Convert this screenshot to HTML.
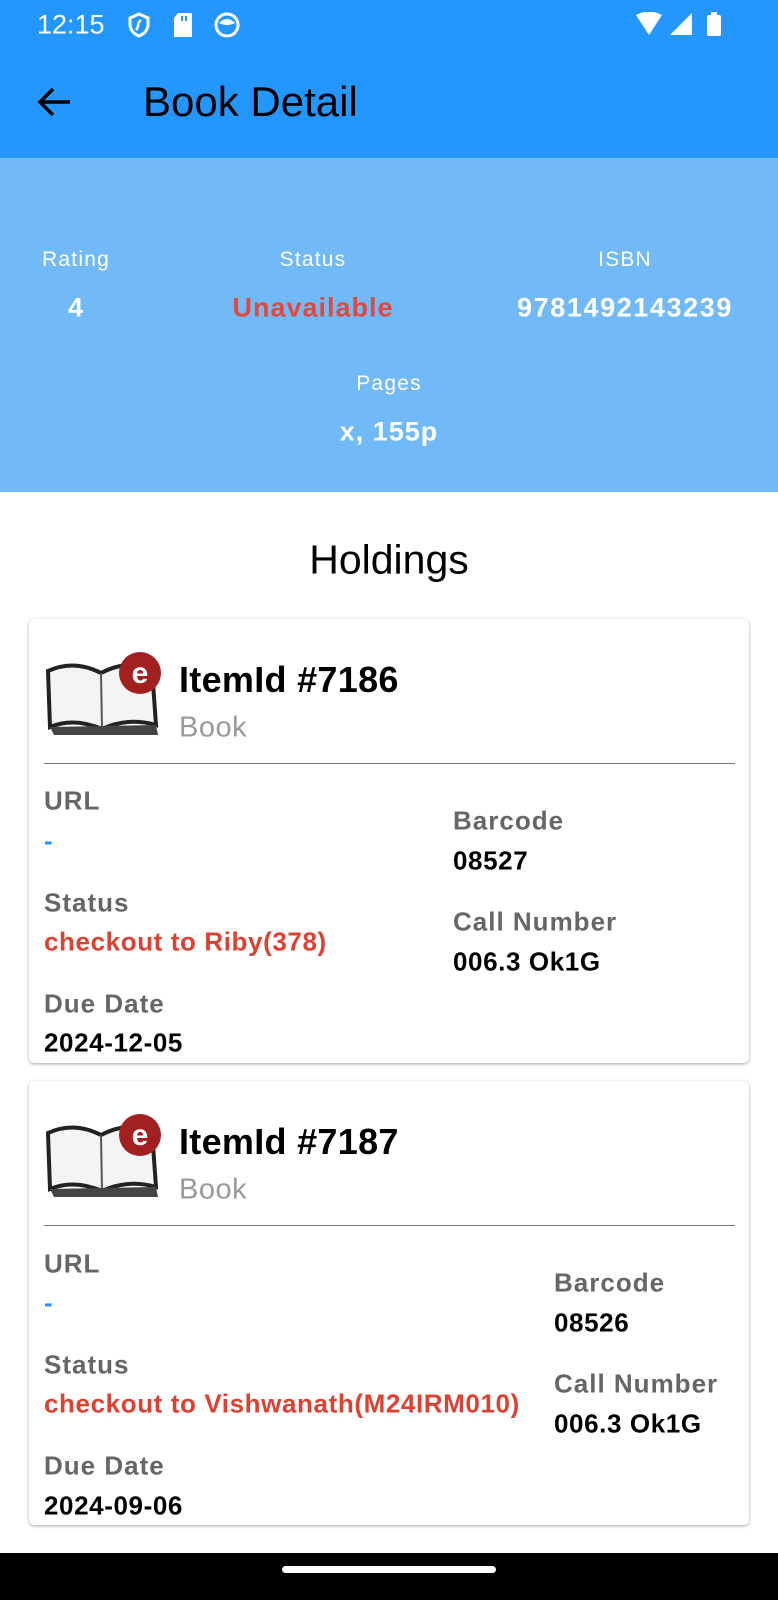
<!DOCTYPE html>
<html><head><meta charset="utf-8"><style>
*{margin:0;padding:0;box-sizing:border-box}
body{width:778px;height:1600px;background:#fff;font-family:"Liberation Sans",sans-serif;position:relative;overflow:hidden}
.a{position:absolute;white-space:nowrap}
.c{transform:translate(-50%,-50%)}
.m{transform:translateY(-50%)}
.lbl{font-size:21px;color:#fff;letter-spacing:1.2px}
.val{font-size:27px;color:#fff;font-weight:bold;letter-spacing:1px}
.card{position:absolute;left:29px;width:720px;background:#fff;border-radius:5px;box-shadow:0 1px 3px rgba(0,0,0,.35)}
.k{font-size:26px;color:#666;font-weight:bold;letter-spacing:1px}
.v{font-size:26px;color:#000;font-weight:bold;letter-spacing:0.6px}
.r{color:#e04030}
</style></head><body>
<div class="a" style="left:0;top:0;width:778px;height:158px;background:#2397fd"></div>
<div class="a m" style="left:37px;top:25px;font-size:27px;color:#fff">12:15</div>
<svg class="a" style="left:126px;top:12px" width="26" height="26" viewBox="0 0 26 26"><path d="M13 2 L22 6 V12 C22 18 18 22 13 24 C8 22 4 18 4 12 V6 Z" fill="none" stroke="#fff" stroke-width="3"/><path d="M10 18 C14 14 10 12 15 8" stroke="#fff" stroke-width="2.5" fill="none"/></svg>
<svg class="a" style="left:172px;top:12px" width="22" height="26"><path d="M6 1H20V25H2V6Z" fill="#fff"/><rect x="9" y="4" width="2" height="5" fill="#2397fd"/><rect x="13" y="4" width="2" height="5" fill="#2397fd"/></svg>
<svg class="a" style="left:213px;top:11px" width="28" height="28"><circle cx="14" cy="14" r="11" fill="none" stroke="#fff" stroke-width="3"/><path d="M6 12 Q14 4 22 12 Q14 16 6 12" fill="#fff"/></svg>
<svg class="a" style="left:636px;top:12px" width="90" height="26"><path d="M0 3 Q13 -4 26 3 L13 23Z" fill="#fff"/><path d="M56 1 V23 H34Z" fill="#fff"/><rect x="71" y="3" width="14" height="21" rx="2" fill="#fff"/><rect x="75" y="0" width="6" height="4" fill="#fff"/></svg>
<svg class="a" style="left:36px;top:86px" width="36" height="32" viewBox="0 0 36 32"><path d="M34 16H4M17 3L4 16L17 29" stroke="#000" stroke-width="3.5" fill="none"/></svg>
<div class="a m" style="left:143px;top:102px;font-size:42px;color:#000">Book Detail</div>
<div class="a" style="left:0;top:158px;width:778px;height:334px;background:#71b9f7"></div>
<div class="a c lbl" style="left:76px;top:260px">Rating</div>
<div class="a c val" style="left:76px;top:308px">4</div>
<div class="a c lbl" style="left:313px;top:260px">Status</div>
<div class="a c val" style="left:313px;top:308px;color:#e5473b">Unavailable</div>
<div class="a c lbl" style="left:625px;top:260px">ISBN</div>
<div class="a c val" style="left:625px;top:308px;letter-spacing:1.6px">9781492143239</div>
<div class="a c lbl" style="left:389px;top:384px">Pages</div>
<div class="a c val" style="left:389px;top:432px">x, 155p</div>
<div class="a c" style="left:389px;top:560px;font-size:41px;color:#000">Holdings</div>

<div class="card" style="top:619px;height:444px"></div>
<div class="card" style="top:1081px;height:444px"></div>

<svg class="a" style="left:44px;top:651px" width="118" height="86" viewBox="0 0 118 86"><path d="M4 20 Q30 8 57 22 Q84 8 108 18 L112 74 Q84 66 58 78 Q30 66 6 76Z" fill="#f4f4f4" stroke="#222" stroke-width="4"/><path d="M57 22 L58 78" stroke="#555" stroke-width="2"/><path d="M6 76 L10 84 L114 84 L112 74" fill="#444"/><circle cx="96" cy="22" r="21" fill="#a32020"/><text x="96" y="32" font-size="30" font-weight="bold" fill="#fff" text-anchor="middle" font-family="Liberation Sans">e</text></svg>
<div class="a m" style="left:179px;top:680px;font-size:36px;font-weight:bold;letter-spacing:0.3px">ItemId #7186</div>
<div class="a m" style="left:179px;top:728px;font-size:29px;color:#999;letter-spacing:0.5px">Book</div>
<div class="a" style="left:44px;top:763px;width:691px;height:1px;background:#777"></div>
<div class="a m k" style="left:44px;top:801px">URL</div>
<div class="a m v" style="left:44px;top:841px;color:#2397fd">-</div>
<div class="a m k" style="left:44px;top:903px">Status</div>
<div class="a m v r" style="left:44px;top:942px">checkout to Riby(378)</div>
<div class="a m k" style="left:44px;top:1004px">Due Date</div>
<div class="a m v" style="left:44px;top:1043px">2024-12-05</div>
<div class="a m k" style="left:453px;top:821px">Barcode</div>
<div class="a m v" style="left:453px;top:861px">08527</div>
<div class="a m k" style="left:453px;top:922px">Call Number</div>
<div class="a m v" style="left:453px;top:962px">006.3 Ok1G</div>

<svg class="a" style="left:44px;top:1113px" width="118" height="86" viewBox="0 0 118 86"><path d="M4 20 Q30 8 57 22 Q84 8 108 18 L112 74 Q84 66 58 78 Q30 66 6 76Z" fill="#f4f4f4" stroke="#222" stroke-width="4"/><path d="M57 22 L58 78" stroke="#555" stroke-width="2"/><path d="M6 76 L10 84 L114 84 L112 74" fill="#444"/><circle cx="96" cy="22" r="21" fill="#a32020"/><text x="96" y="32" font-size="30" font-weight="bold" fill="#fff" text-anchor="middle" font-family="Liberation Sans">e</text></svg>
<div class="a m" style="left:179px;top:1142px;font-size:36px;font-weight:bold;letter-spacing:0.3px">ItemId #7187</div>
<div class="a m" style="left:179px;top:1190px;font-size:29px;color:#999;letter-spacing:0.5px">Book</div>
<div class="a" style="left:44px;top:1225px;width:691px;height:1px;background:#777"></div>
<div class="a m k" style="left:44px;top:1264px">URL</div>
<div class="a m v" style="left:44px;top:1303px;color:#2397fd">-</div>
<div class="a m k" style="left:44px;top:1365px">Status</div>
<div class="a m v r" style="left:44px;top:1404px">checkout to Vishwanath(M24IRM010)</div>
<div class="a m k" style="left:44px;top:1466px">Due Date</div>
<div class="a m v" style="left:44px;top:1506px">2024-09-06</div>
<div class="a m k" style="left:554px;top:1283px">Barcode</div>
<div class="a m v" style="left:554px;top:1323px">08526</div>
<div class="a m k" style="left:554px;top:1384px">Call Number</div>
<div class="a m v" style="left:554px;top:1424px">006.3 Ok1G</div>

<div class="a" style="left:0;top:1553px;width:778px;height:47px;background:#000"></div>
<div class="a" style="left:282px;top:1566px;width:214px;height:7px;border-radius:4px;background:#fff"></div>
</body></html>
